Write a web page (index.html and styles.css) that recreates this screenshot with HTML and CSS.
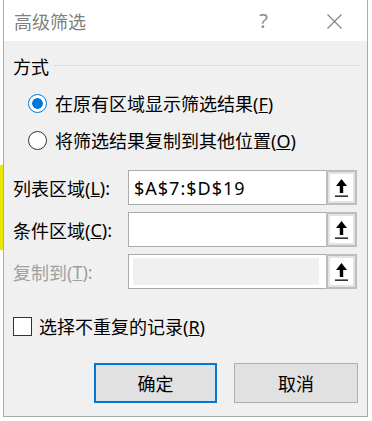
FILE: index.html
```html
<!DOCTYPE html>
<html lang="zh-CN">
<head>
    <meta charset="UTF-8">
    <meta name="viewport" content="width=device-width, initial-scale=1.0">
    <title>高级筛选</title>
    <link rel="stylesheet" href="styles.css">
</head>
<body>
    <div class="dialog">
        <div class="titlebar">
            <span class="title">高级筛选</span>
            <span class="help">?</span>
            <span class="close">
                <svg width="15" height="15" viewBox="0 0 15 15"><path d="M0.5 0.5L14.5 14.5M14.5 0.5L0.5 14.5" stroke="#808080" stroke-width="1.1" fill="none"/></svg>
            </span>
        </div>
        <div class="content">
            <div class="group-head"><span>方式</span><span class="rule"></span></div>
            <div class="option"><span class="radio checked"></span><span>在原有区域显示筛选结果(<u>F</u>)</span></div>
            <div class="option"><span class="radio"></span><span>将筛选结果复制到其他位置(<u>O</u>)</span></div>

            <div class="field first">
                <span class="field-label">列表区域(<u>L</u>):</span>
                <span class="input">$A$7:$D$19</span>
                <span class="pick"><svg width="15" height="20" viewBox="0 0 15 20"><polygon points="7.5,1 13,8 9.2,8 9.2,15 5.8,15 5.8,8 2,8" fill="#000"/><rect x="1" y="17.5" width="13" height="1.3" fill="#000"/></svg></span>
            </div>
            <div class="field">
                <span class="field-label">条件区域(<u>C</u>):</span>
                <span class="input"></span>
                <span class="pick"><svg width="15" height="20" viewBox="0 0 15 20"><polygon points="7.5,1 13,8 9.2,8 9.2,15 5.8,15 5.8,8 2,8" fill="#000"/><rect x="1" y="17.5" width="13" height="1.3" fill="#000"/></svg></span>
            </div>
            <div class="field disabled">
                <span class="field-label">复制到(<u>T</u>):</span>
                <span class="input"></span>
                <span class="pick"><svg width="15" height="20" viewBox="0 0 15 20"><polygon points="7.5,1 13,8 9.2,8 9.2,15 5.8,15 5.8,8 2,8" fill="#000"/><rect x="1" y="17.5" width="13" height="1.3" fill="#000"/></svg></span>
            </div>

            <div class="check"><span class="box"></span><span>选择不重复的记录(<u>R</u>)</span></div>

            <div class="actions">
                <button class="btn primary">确定</button>
                <button class="btn cancel">取消</button>
            </div>
        </div>
    </div>
</body>
</html>
```

FILE: styles.css
```css
body {
    margin: 0;
    background-color: #fff;
    background-image: linear-gradient(#e8e800, #e8e800);
    background-size: 3px 85px;
    background-position: 0 165px;
    background-repeat: no-repeat;
    font-family: "Noto Sans", "Noto Sans CJK SC", sans-serif;
    color: #000;
}
.dialog {
    width: 363px;
    height: 416px;
    margin-left: 3px;
    border: 1px solid #ababab;
    border-top: none;
    background-color: #f0f0f0;
}
.titlebar {
    height: 41px;
    display: flex;
    align-items: center;
    padding-left: 10px;
    background-color: #fff;
}
.title {
    font-size: 18px;
    color: #7f7f7f;
}
.help {
    margin-left: auto;
    font-size: 20px;
    color: #8a8a8a;
    margin-right: 59px;
}
.close {
    display: flex;
    margin-right: 25px;
    margin-top: 2px;
}
.content {
    padding: 13px 9px 0 9px;
    font-size: 18px;
}
.group-head {
    display: flex;
    align-items: center;
    height: 24px;
}
.rule {
    flex: 1;
    height: 1px;
    background-color: #dcdcdc;
    margin-left: 5px;
    margin-right: -1px;
    margin-top: -2px;
}
.option {
    display: flex;
    align-items: center;
    gap: 8px;
    height: 24px;
    margin-top: 13px;
    margin-left: 15px;
}
.radio {
    width: 19px;
    height: 19px;
    box-sizing: border-box;
    border: 1px solid #333;
    border-radius: 50%;
    background-color: #fff;
}
.radio.checked {
    border-color: #0078d7;
    background: radial-gradient(circle, #0078d7 5px, #fff 5.6px);
}
.field {
    display: flex;
    height: 35px;
    margin-top: 7px;
}
.field.first {
    margin-top: 18px;
}
.field-label {
    width: 115px;
    display: flex;
    align-items: center;
}
.input {
    width: 198px;
    box-sizing: border-box;
    border: 1px solid #ababab;
    border-right: none;
    background-color: #fff;
    padding: 0 5px;
    display: flex;
    align-items: center;
    font-size: 18px;
    letter-spacing: 1px;
}
.pick {
    width: 31px;
    box-sizing: border-box;
    border: 2px solid #bdbdbd;
    box-shadow: inset 0 0 0 2px #e3e3e3;
    background-color: #fff;
    display: flex;
    align-items: center;
    justify-content: center;
}
.disabled .field-label {
    color: #a0a0a0;
}
.disabled .input {
    background-color: #f0f0f0;
    box-shadow: inset 4px 3px 0 #fff, inset -7px -3px 0 #fff;
}
.check {
    display: flex;
    align-items: center;
    gap: 7px;
    height: 24px;
    margin-top: 25px;
}
.box {
    width: 19px;
    height: 19px;
    box-sizing: border-box;
    border: 1px solid #333;
    background-color: #fff;
}
.actions {
    display: flex;
    justify-content: flex-end;
    gap: 17px;
    margin-top: 25px;
}
.btn {
    height: 40px;
    box-sizing: border-box;
    background-color: #e1e1e1;
    font-family: "Noto Sans", "Noto Sans CJK SC", sans-serif;
    font-size: 18px;
    color: #000;
    padding: 0;
}
.btn.primary {
    width: 123px;
    border: 2px solid #0078d7;
}
.btn.cancel {
    width: 124px;
    border: 1px solid #adadad;
}
```
